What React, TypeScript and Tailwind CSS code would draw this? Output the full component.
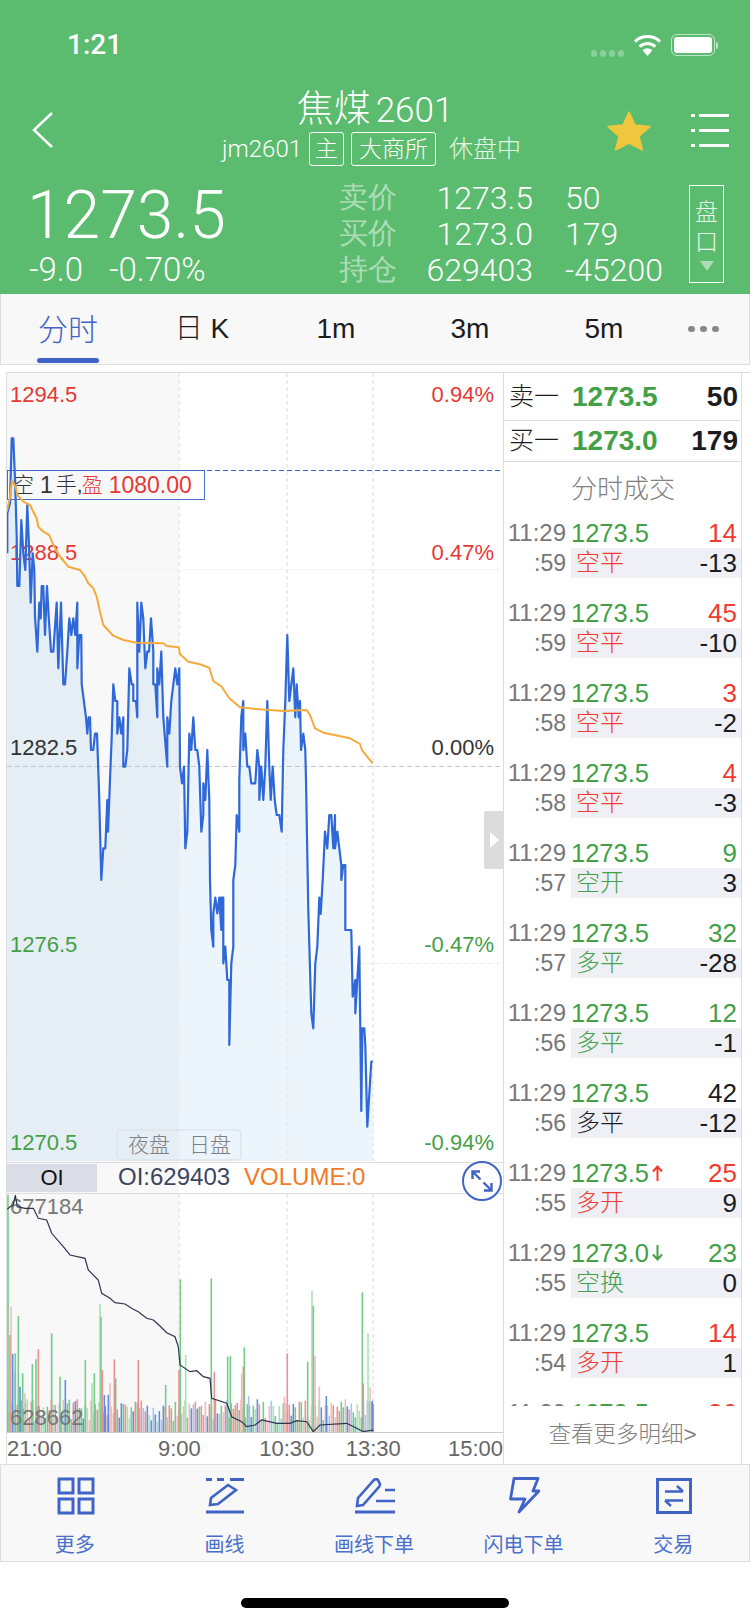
import React from "react";

// traced from the chart: x and y are 3x page pixels, y counted from 370
const priceTrace: number[][] = [
  [22,550],[22,430],[30,400],[35,205],[40,205],[46,350],[50,500],[52,648],[58,648],[64,450],[70,550],[76,600],[82,405],[88,550],[92,698],[98,550],[103,600],[105,740],[112,845],[118,698],[122,745],[125,648],[130,648],[135,795],[141,648],[146,740],[153,845],[160,845],[170,698],[175,895],[183,698],[190,943],[195,943],[202,845],[208,745],[214,795],[220,745],[226,795],[232,698],[232,895],[238,795],[244,795],[245,943],[258,1042],[262,1091],[266,1042],[270,1042],[273,1140],[280,1140],[285,1091],[291,1091],[297,1260],[304,1530],[310,1435],[316,1435],[322,1290],[324,1385],[330,1230],[335,1100],[340,943],[346,993],[352,993],[352,1091],[358,1042],[364,1091],[370,1042],[370,1190],[376,1190],[382,1140],[388,895],[395,943],[400,943],[400,993],[408,993],[412,1042],[412,698],[418,845],[424,698],[430,745],[436,895],[442,845],[447,845],[453,745],[460,845],[460,943],[466,943],[472,1042],[472,895],[478,943],[484,845],[490,1042],[502,1190],[502,1042],[508,1091],[514,993],[526,895],[532,943],[538,895],[540,1190],[546,1240],[552,1190],[556,1435],[562,1385],[568,1091],[574,1140],[580,1042],[586,1140],[592,1140],[598,1190],[604,1385],[610,1335],[610,1240],[616,1290],[622,1140],[628,1290],[630,1530],[634,1680],[640,1730],[640,1630],[646,1583],[652,1630],[658,1583],[664,1680],[664,1583],[670,1583],[670,1780],[676,1730],[682,1830],[688,1830],[688,2025],[694,1780],[700,1730],[700,1530],[706,1485],[710,1335],[718,1385],[718,1230],[724,1040],[730,993],[730,1140],[736,1091],[742,1190],[748,1190],[754,1240],[766,1240],[772,1140],[778,1190],[778,1290],[784,1190],[790,1290],[796,1190],[802,993],[808,1190],[812,1290],[818,1190],[824,1290],[830,1335],[838,1335],[845,1385],[850,1140],[856,993],[862,795],[868,993],[880,895],[886,1042],[890,943],[896,1042],[900,993],[903,1140],[910,1091],[916,1140],[918,1230],[925,1620],[934,1930],[940,1975],[946,1780],[952,1730],[958,1583],[962,1632],[968,1530],[975,1385],[982,1435],[988,1335],[994,1335],[1000,1435],[1005,1335],[1005,1435],[1012,1385],[1024,1485],[1024,1530],[1030,1485],[1036,1485],[1036,1680],[1054,1680],[1058,1880],[1066,1830],[1066,1930],[1072,1830],[1078,1730],[1084,2223],[1087,1975],[1093,1975],[1096,2025],[1102,2270],[1114,2075],[1118,2075],
];

const avgTrace: number[][] = [
  [20,425],[26,400],[30,380],[36,330],[48,355],[52,375],[70,395],[90,405],[100,425],[110,445],[115,470],[130,485],[148,495],[160,525],[180,560],[205,590],[240,600],[255,620],[265,640],[280,655],[290,680],[300,725],[310,765],[340,797],[370,810],[410,818],[490,820],[500,828],[536,832],[540,852],[565,875],[600,883],[628,893],[640,933],[665,950],[688,985],[720,1012],[780,1018],[850,1023],[920,1020],[930,1035],[945,1075],[970,1088],[1050,1105],[1080,1122],[1087,1142],[1118,1180],
];

// open interest, y counted from 1150
const oiTrace: number[][] = [
  [22,178],[30,170],[40,165],[46,135],[52,170],[75,175],[100,175],[115,205],[140,210],[155,250],[190,290],[210,315],[255,325],[265,360],[295,390],[305,430],[330,445],[345,458],[375,462],[400,478],[415,485],[440,505],[460,510],[480,528],[500,548],[525,560],[535,590],[540,645],[570,665],[590,662],[610,680],[630,685],[635,745],[680,760],[695,800],[725,815],[740,830],[765,825],[785,810],[830,820],[870,820],[890,812],[920,815],[940,845],[960,825],[1040,820],[1070,835],[1090,845],[1120,840],
];

const BAR_COLORS: Record<string, string> = {
  g: "#74cc8c",
  l: "#a9e0b8",
  p: "#ee9090",
  q: "#f3bcbc",
  b: "#5f8fe2",
  c: "#a8c4f0",
};

const tallBars: [number, number, string][] = [
  [24,135,"g"],[33,470,"q"],[30,555,"p"],[38,612,"b"],[42,665,"c"],[46,610,"g"],[55,498,"g"],[60,710,"b"],[68,670,"g"],[75,730,"q"],[97,642,"g"],[108,628,"g"],[115,598,"p"],[155,550,"g"],[180,680,"g"],[196,690,"b"],[256,630,"g"],[276,700,"l"],[283,670,"g"],[300,462,"l"],[303,500,"g"],[307,660,"p"],[313,735,"b"],[325,735,"b"],[330,700,"q"],[343,628,"p"],[347,685,"g"],[415,630,"p"],[497,705,"g"],[537,660,"p"],[541,388,"g"],[557,615,"l"],[634,385,"g"],[643,665,"p"],[683,620,"g"],[691,618,"g"],[733,592,"g"],[730,650,"p"],[725,670,"q"],[746,738,"c"],[862,610,"p"],[853,740,"q"],[923,635,"g"],[936,423,"l"],[940,468,"g"],[945,618,"q"],[958,710,"q"],[979,738,"b"],[1087,427,"g"],[1090,700,"p"],[1104,550,"l"],[1110,712,"q"],[1117,752,"b"],
];

const fillerBars: [number, number, string][] = [];
for (let i = 0; i < 184; i++) {
  const seed = (i * 37 + (i * i) % 41) % 97;
  const kinds = ["g", "p", "l", "q", "g", "p", "c", "b"];
  fillerBars.push([22 + i * 6, 748 + (seed % 70), kinds[(i * 5 + seed) % 8]]);
}

const toPoints = (trace: number[][], top: number) =>
  trace.map(([x, y]) => `${(x / 3).toFixed(1)},${(top + y / 3).toFixed(1)}`).join(" ");

const priceLine = toPoints(priceTrace, 370);
const priceArea = `7,1161 ${priceLine} 373,1161`;

const trades = [
  { sec: ":59", qty: "14", qtyColor: "text-[#f03a2e]", label: "空平", labelColor: "text-[#f03a2e]", diff: "-13" },
  { sec: ":59", qty: "45", qtyColor: "text-[#f03a2e]", label: "空平", labelColor: "text-[#f03a2e]", diff: "-10" },
  { sec: ":58", qty: "3", qtyColor: "text-[#f03a2e]", label: "空平", labelColor: "text-[#f03a2e]", diff: "-2" },
  { sec: ":58", qty: "4", qtyColor: "text-[#f03a2e]", label: "空平", labelColor: "text-[#f03a2e]", diff: "-3" },
  { sec: ":57", qty: "9", qtyColor: "text-[#43a047]", label: "空开", labelColor: "text-[#43a047]", diff: "3" },
  { sec: ":57", qty: "32", qtyColor: "text-[#43a047]", label: "多平", labelColor: "text-[#43a047]", diff: "-28" },
  { sec: ":56", qty: "12", qtyColor: "text-[#43a047]", label: "多平", labelColor: "text-[#43a047]", diff: "-1" },
  { sec: ":56", qty: "42", qtyColor: "text-[#1c1c1e]", label: "多平", labelColor: "text-[#1c1c1e]", diff: "-12" },
  { sec: ":55", qty: "25", qtyColor: "text-[#f03a2e]", label: "多开", labelColor: "text-[#f03a2e]", diff: "9", arrow: "up" },
  { sec: ":55", price: "1273.0", qty: "23", qtyColor: "text-[#43a047]", label: "空换", labelColor: "text-[#43a047]", diff: "0", arrow: "down" },
  { sec: ":54", qty: "14", qtyColor: "text-[#f03a2e]", label: "多开", labelColor: "text-[#f03a2e]", diff: "1" },
  { sec: ":54", qty: "26", qtyColor: "text-[#f03a2e]", label: "多开", labelColor: "text-[#f03a2e]", diff: "2" },
];

const Row = ({ label, value, qty }: { label: string; value: string; qty: string }) => (
  <div className="flex h-[36px] items-center text-[32px] font-light">
    <span className="ml-[-1px] w-[58px] text-[29px] text-white/50">{label}</span>
    <span className="w-[136px] text-right">{value}</span>
    <span className="ml-[32px]">{qty}</span>
  </div>
);

const ToolItem = ({ label, children }: { label: string; children: React.ReactNode }) => (
  <div className="flex w-[150px] flex-col items-center">
    <div className="flex h-[38px] items-center justify-center">{children}</div>
    <span className="mr-[2px] mt-[16px] text-[20px] leading-[28px] text-[#4a6fcc]">{label}</span>
  </div>
);

const App = () => {
  return (
    <div className="flex h-[1624px] w-[750px] flex-col overflow-hidden bg-white font-['Liberation_Sans','Noto_Sans_CJK_SC',sans-serif]">
      {/* Header */}
      <div className="h-[294px] shrink-0 bg-[#5bbb6e] text-white">
        <div className="flex h-[90px] items-center pl-[67px] pr-[35px]">
          <span className="font-['Roboto'] text-[28px] font-medium">1:21</span>
          <div className="ml-auto flex items-center">
            <div className="mt-[16px] flex gap-[3px]">
              <span className="h-[7px] w-[6px] rounded-full bg-white/30" />
              <span className="h-[7px] w-[6px] rounded-full bg-white/30" />
              <span className="h-[7px] w-[6px] rounded-full bg-white/30" />
              <span className="h-[7px] w-[6px] rounded-full bg-white/30" />
            </div>
            <svg className="ml-[9px]" width="29" height="22" viewBox="0 0 29 22">
              <path d="M14.5 22 L9.6 16.2 A7 7 0 0 1 19.4 16.2 Z" fill="#fff" />
              <path d="M6.6 12.6 A11.5 11.5 0 0 1 22.4 12.6" fill="none" stroke="#fff" strokeWidth="3" />
              <path d="M2 7.6 A18 18 0 0 1 27 7.6" fill="none" stroke="#fff" strokeWidth="3" />
            </svg>
            <div className="relative ml-[9px] flex h-[22px] w-[44px] items-center rounded-[6px] border border-white/60 p-[2px]">
              <div className="h-full w-full rounded-[3px] bg-white" />
              <div className="absolute right-[-4px] h-[7px] w-[2px] rounded-r bg-white/60" />
            </div>
          </div>
        </div>

        <div className="grid h-[84px] grid-cols-[150px_1fr_150px]">
          <div className="pl-[32px] pt-[22px]">
            <svg width="22" height="36" viewBox="0 0 22 36">
              <path d="M20 1 L2 18 L20 35" fill="none" stroke="#fff" strokeWidth="2.5" />
            </svg>
          </div>
          <div className="flex flex-col items-center">
            <div className="mt-[2px] h-[36px] text-[37px] font-light leading-[36px]">
              <span>焦煤</span>
              <span className="ml-[5px] font-['Roboto'] text-[35px]">2601</span>
            </div>
            <div className="mr-[7px] mt-[4px] flex h-[34px] items-center text-[23px] font-light">
              <span className="font-['Roboto'] text-[24px]">jm2601</span>
              <span className="ml-[7px] flex h-[34px] w-[35px] items-center justify-center rounded-[3px] border-[1.5px] border-white text-[23px]">主</span>
              <span className="ml-[7px] flex h-[34px] w-[85px] items-center justify-center rounded-[3px] border-[1.5px] border-white text-[23px]">大商所</span>
              <span className="ml-[13px] text-[24px] text-white/85">休盘中</span>
            </div>
          </div>
          <div className="flex items-start pl-[7px] pt-[21px]">
            <svg width="44" height="40" viewBox="0 0 44 40">
              <path d="M22 1 L28 14 L43 15.5 L32 25.5 L35.5 39 L22 32 L8.5 39 L12 25.5 L1 15.5 L16 14 Z" fill="#efc73e" stroke="#efc73e" strokeLinejoin="round" strokeWidth="1.5" />
            </svg>
            <svg className="ml-[40px] mt-[2px]" width="38" height="34" viewBox="0 0 38 34">
              <g fill="#fff">
                <rect x="0" y="1" width="4" height="3" />
                <rect x="8" y="1" width="30" height="3" />
                <rect x="0" y="16" width="4" height="3" />
                <rect x="8" y="16" width="30" height="3" />
                <rect x="0" y="31" width="4" height="3" />
                <rect x="8" y="31" width="30" height="3" />
              </g>
            </svg>
          </div>
        </div>

        <div className="flex h-[120px]">
          <div className="w-[340px] pl-[27px]">
            <div className="mt-[8px] font-['Roboto'] text-[66px] font-light leading-[68px]">1273.5</div>
            <div className="mt-[6px] flex h-[28px] items-center font-['Roboto'] text-[33px] font-light leading-[28px]">
              <span className="ml-[2px]">-9.0</span>
              <span className="ml-[26px]">-0.70%</span>
            </div>
          </div>
          <div className="mt-[6px] w-[349px] font-['Roboto']">
            <Row label="卖价" value="1273.5" qty="50" />
            <Row label="买价" value="1273.0" qty="179" />
            <Row label="持仓" value="629403" qty="-45200" />
          </div>
          <div className="mt-[11px] flex h-[98px] w-[35px] flex-col items-center border border-white text-[23px] font-light leading-[30px] text-white/85">
            <span className="mt-[11px]">盘</span>
            <span>口</span>
            <span className="mt-[4px] h-0 w-0 border-x-[7px] border-t-[10px] border-x-transparent border-t-white/50" />
          </div>
        </div>
      </div>

      {/* Period tabs */}
      <div className="flex h-[71px] shrink-0 items-center border-x border-b border-[#ddd] bg-[#f8f8f8] text-[28px] font-light text-[#1c1c1e]">
        <div className="relative flex h-full w-[134px] items-center justify-center text-[30px] text-[#3f63c6]">
          分时
          <span className="absolute bottom-[1px] left-[36px] h-[5px] w-[62px] rounded-full bg-[#3f63c6]" />
        </div>
        <div className="w-[134px] text-center">日 K</div>
        <div className="w-[134px] text-center">1m</div>
        <div className="w-[134px] text-center">3m</div>
        <div className="w-[134px] text-center">5m</div>
        <div className="ml-[17px] flex gap-[5px]">
          <span className="h-[6px] w-[7px] rounded-full bg-[#888]" />
          <span className="h-[6px] w-[7px] rounded-full bg-[#888]" />
          <span className="h-[6px] w-[7px] rounded-full bg-[#888]" />
        </div>
      </div>

      {/* Chart and tick list */}
      <div className="ml-[6px] mt-[7px] flex h-[1092px] shrink-0 border-t border-[#ddd]">
        <div className="flex w-[497px] flex-col border-l border-[#ddd]">
          <div className="relative h-[789px] shrink-0 overflow-hidden">
            <svg className="absolute left-0 top-0" width="496" height="789" viewBox="7 373 496 789">
              <rect x="7" y="373" width="172" height="789" fill="#f8f8f8" />
              <polygon points={priceArea} fill="#2f80e0" fillOpacity="0.09" />
              <g stroke="#ececec" strokeWidth="2" strokeDasharray="4 3">
                <line x1="179" y1="373" x2="179" y2="1162" />
                <line x1="287" y1="373" x2="287" y2="1162" />
                <line x1="373" y1="373" x2="373" y2="1162" />
              </g>
              <line x1="7" y1="569.5" x2="503" y2="569.5" stroke="#eeeeee" strokeDasharray="5 3" />
              <line x1="7" y1="963.5" x2="503" y2="963.5" stroke="#eeeeee" strokeDasharray="5 3" />
              <line x1="7" y1="766.5" x2="503" y2="766.5" stroke="#c6c6c6" strokeDasharray="5 3" />
            </svg>

            <span className="absolute left-[3px] top-[9px] text-[22px] leading-[26px] text-[#e53935]">1294.5</span>
            <span className="absolute left-[3px] top-[167px] text-[22px] leading-[26px] text-[#e53935]">1288.5</span>
            <span className="absolute left-[3px] top-[362px] text-[22px] leading-[26px] text-[#333]">1282.5</span>
            <span className="absolute left-[3px] top-[559px] text-[22px] leading-[26px] text-[#43a047]">1276.5</span>
            <span className="absolute left-[3px] top-[757px] text-[22px] leading-[26px] text-[#43a047]">1270.5</span>
            <span className="absolute right-[9px] top-[9px] text-[22px] leading-[26px] text-[#e53935]">0.94%</span>
            <span className="absolute right-[9px] top-[167px] text-[22px] leading-[26px] text-[#e53935]">0.47%</span>
            <span className="absolute right-[9px] top-[362px] text-[22px] leading-[26px] text-[#333]">0.00%</span>
            <span className="absolute right-[9px] top-[559px] text-[22px] leading-[26px] text-[#43a047]">-0.47%</span>
            <span className="absolute right-[9px] top-[757px] text-[22px] leading-[26px] text-[#43a047]">-0.94%</span>

            <div className="absolute left-0 top-[97px] flex h-[30px] w-[198px] items-center border border-[#4a6fc8] pl-[5px] text-[21px] leading-[28px] text-[#333]">
              <span className="font-light">空</span>
              <span className="ml-[6px] text-[23px]">1</span>
              <span className="ml-[3px] font-light">手,</span>
              <span className="ml-[-1px] font-light text-[#e53935]">盈</span>
              <span className="ml-[6px] text-[23px] text-[#e53935]">1080.00</span>
            </div>

            <div className="absolute left-[109px] top-[756px] flex h-[32px] w-[126px] rounded-[5px] border-2 border-[#dfe4ec]/80 text-[21px] font-light leading-[28px] text-[#808080]">
              <span className="w-[62px] text-center">夜盘</span>
              <span className="flex-1 text-center">日盘</span>
            </div>

            <svg className="absolute left-0 top-0" width="496" height="789" viewBox="7 373 496 789">
              <line x1="7" y1="470.5" x2="503" y2="470.5" stroke="#3366dd" strokeDasharray="5 3" />
              <polyline points={priceLine} fill="none" stroke="#2f68d8" strokeWidth="2.2" strokeLinejoin="round" />
              <polyline points={toPoints(avgTrace, 370)} fill="none" stroke="#f4aa3c" strokeWidth="2" strokeLinejoin="round" />
            </svg>

            <div className="absolute right-0 top-[438px] flex h-[58px] w-[19px] items-center justify-center rounded-l-[2px] bg-[#dcdcdc]">
              <span className="ml-[2px] h-0 w-0 border-y-[8px] border-l-[9px] border-y-transparent border-l-white" />
            </div>
          </div>

          {/* OI bar */}
          <div className="relative flex h-[32px] shrink-0 items-center border-y border-[#ddd] text-[24px]">
            <div className="absolute bottom-0 left-0 top-0 w-[172px] bg-[#f8f8f8]" />
            <div className="relative h-[28px] w-[90px] bg-[#dadde5] text-center text-[22px] leading-[28px] text-[#111]">OI</div>
            <span className="relative ml-[21px] pb-[3px] text-[#3c4660]">OI:629403</span>
            <span className="relative ml-[14px] pb-[3px] text-[#f07a28]">VOLUME:0</span>
            <div className="absolute right-[1px] top-[-2px] z-10 flex h-[40px] w-[40px] items-center justify-center rounded-full border-2 border-[#3f63c6] bg-white">
              <svg width="26" height="26" viewBox="0 0 26 26" fill="none" stroke="#3f63c6" strokeWidth="2.4">
                <path d="M4 4 L11.5 11.5 M14.5 14.5 L22 22" />
                <path d="M3.5 11 V3.5 H11" />
                <path d="M22.5 15 V22.5 H15" />
              </svg>
            </div>
          </div>

          {/* Open interest and volume */}
          <div className="relative h-[239px] shrink-0 overflow-hidden border-b border-[#ccc]">
            <svg className="absolute left-0 top-0" width="496" height="239" viewBox="7 1194 496 239">
              <rect x="7" y="1194" width="172" height="239" fill="#f8f8f8" />
              <g stroke="#ececec" strokeWidth="2" strokeDasharray="4 3">
                <line x1="179" y1="1194" x2="179" y2="1433" />
                <line x1="287" y1="1194" x2="287" y2="1433" />
                <line x1="373" y1="1194" x2="373" y2="1433" />
              </g>
              <g strokeWidth="1.6">
                {fillerBars.map(([x, y, c], i) => (
                  <line key={i} x1={x / 3} x2={x / 3} y1={1150 + y / 3} y2={1433} stroke={BAR_COLORS[c]} />
                ))}
                {tallBars.map(([x, y, c], i) => (
                  <line key={i} x1={x / 3} x2={x / 3} y1={1150 + y / 3} y2={1433} stroke={BAR_COLORS[c]} />
                ))}
              </g>
            </svg>
            <span className="absolute left-[3px] top-[0px] text-[22px] leading-[26px] text-[#777]">677184</span>
            <span className="absolute left-[3px] top-[211px] text-[22px] leading-[26px] text-[#777]">628662</span>
            <svg className="absolute left-0 top-0" width="496" height="239" viewBox="7 1194 496 239">
              <polyline points={toPoints(oiTrace, 1150)} fill="none" stroke="#2c3550" strokeWidth="1.2" />
            </svg>
          </div>

          <div className="flex h-[31px] shrink-0 items-center text-[22px] text-[#666]">
            <span className="w-[152px]">21:00</span>
            <span className="w-[102px]">9:00</span>
            <span className="w-[87px]">10:30</span>
            <span className="w-[103px]">13:30</span>
            <span>15:00</span>
          </div>
        </div>

        {/* Tick list */}
        <div className="flex w-[239px] flex-col border-x border-[#ddd]">
          <div className="flex h-[48px] shrink-0 items-center border-b border-[#ddd]">
            <span className="ml-[5px] w-[63px] text-[25px] font-light text-[#1c1c1e]">卖一</span>
            <span className="text-[28px] font-bold text-[#43a047]">1273.5</span>
            <span className="ml-auto mr-[3px] text-[28px] font-bold text-[#1c1c1e]">50</span>
          </div>
          <div className="flex h-[41px] shrink-0 items-center border-b border-[#ddd]">
            <span className="ml-[5px] w-[63px] text-[25px] font-light text-[#1c1c1e]">买一</span>
            <span className="text-[28px] font-bold text-[#43a047]">1273.0</span>
            <span className="ml-auto mr-[3px] text-[28px] font-bold text-[#1c1c1e]">179</span>
          </div>
          <div className="h-[56px] shrink-0 pl-[67px] pt-[10px] text-[26px] font-light leading-[34px] text-[#808080]">分时成交</div>
          <div className="h-[888px] shrink-0 overflow-hidden">
            {trades.map((t, i) => (
              <div key={i} className="h-[80px]">
                <div className="flex h-[30px] items-center">
                  <span className="w-[62px] text-right text-[24px] text-[#777]">11:29</span>
                  <span className="ml-[5px] text-[25.5px] text-[#43a047]">{t.price ?? "1273.5"}</span>
                  {t.arrow === "up" && (
                    <svg className="ml-[3px]" width="11" height="16" viewBox="0 0 11 16" fill="none" stroke="#f03a2e" strokeWidth="2">
                      <path d="M5.5 16 V2 M1 6.5 L5.5 1.5 L10 6.5" />
                    </svg>
                  )}
                  {t.arrow === "down" && (
                    <svg className="ml-[3px]" width="11" height="16" viewBox="0 0 11 16" fill="none" stroke="#43a047" strokeWidth="2">
                      <path d="M5.5 0 V14 M1 9.5 L5.5 14.5 L10 9.5" />
                    </svg>
                  )}
                  <span className={`ml-auto mr-[4px] text-[26px] ${t.qtyColor}`}>{t.qty}</span>
                </div>
                <div className="flex h-[30px] items-center">
                  <span className="w-[62px] text-right text-[23px] text-[#777]">{t.sec}</span>
                  <div className="ml-[5px] flex h-[30px] flex-1 items-center bg-[#eff0f6]">
                    <span className={`ml-[5px] text-[24px] font-light ${t.labelColor}`}>{t.label}</span>
                    <span className="ml-auto mr-[4px] text-[26px] text-[#1c1c1e]">{t.diff}</span>
                  </div>
                </div>
              </div>
            ))}
          </div>
          <div className="flex h-[57px] shrink-0 items-center justify-center text-[22.5px] font-light text-[#808080]">查看更多明细&gt;</div>
        </div>
      </div>

      {/* Bottom toolbar */}
      <div className="flex h-[98px] shrink-0 items-start border border-[#ddd] bg-[#f8f8f8] pt-[12px]">
        <ToolItem label="更多">
          <svg width="38" height="38" viewBox="0 0 38 38" fill="none" stroke="#3f63c6" strokeWidth="3">
            <rect x="2" y="2" width="14" height="14" />
            <rect x="22" y="2" width="14" height="14" />
            <rect x="2" y="22" width="14" height="14" />
            <rect x="22" y="22" width="14" height="14" />
          </svg>
        </ToolItem>
        <ToolItem label="画线">
          <svg width="38" height="36" viewBox="0 0 38 36" fill="none" stroke="#3f63c6" strokeWidth="2.6">
            <path d="M0 1.5 H6 M11 1.5 H18 M24 1.5 H38" strokeWidth="3" />
            <path d="M4 27 L5 20 L22 7 L30 12 L12 26 Z" />
            <path d="M0 34 H38" strokeWidth="3" />
          </svg>
        </ToolItem>
        <ToolItem label="画线下单">
          <svg width="40" height="36" viewBox="0 0 40 36" fill="none" stroke="#3f63c6" strokeWidth="2.6">
            <path d="M2 28 L3 20 L19 2 Q21 0 23 2 L25 6 Q25 8 24 9 L8 27 Z" />
            <path d="M30 12 H40 M21 23 H40" />
            <path d="M0 34 H40" strokeWidth="3" />
          </svg>
        </ToolItem>
        <ToolItem label="闪电下单">
          <svg width="31" height="38" viewBox="0 0 31 38" fill="none" stroke="#3f63c6" strokeWidth="2.8" strokeLinejoin="round">
            <path d="M5 1.5 H29 L24 14 H30 L10 35 L16 22 H1.5 Z" />
          </svg>
        </ToolItem>
        <ToolItem label="交易">
          <svg width="36" height="36" viewBox="0 0 36 36" fill="none" stroke="#3f63c6" strokeWidth="3">
            <rect x="1.5" y="1.5" width="33" height="33" />
            <path d="M9 13.5 H27 M21 8 L27 13.5" strokeWidth="2.4" />
            <path d="M27 22.5 H9 M15 28 L9 22.5" strokeWidth="2.4" />
          </svg>
        </ToolItem>
      </div>

      {/* Home indicator */}
      <div className="flex flex-1 items-start justify-center pt-[36px]">
        <div className="h-[10px] w-[268px] rounded-full bg-black" />
      </div>
    </div>
  );
};

export default App;
